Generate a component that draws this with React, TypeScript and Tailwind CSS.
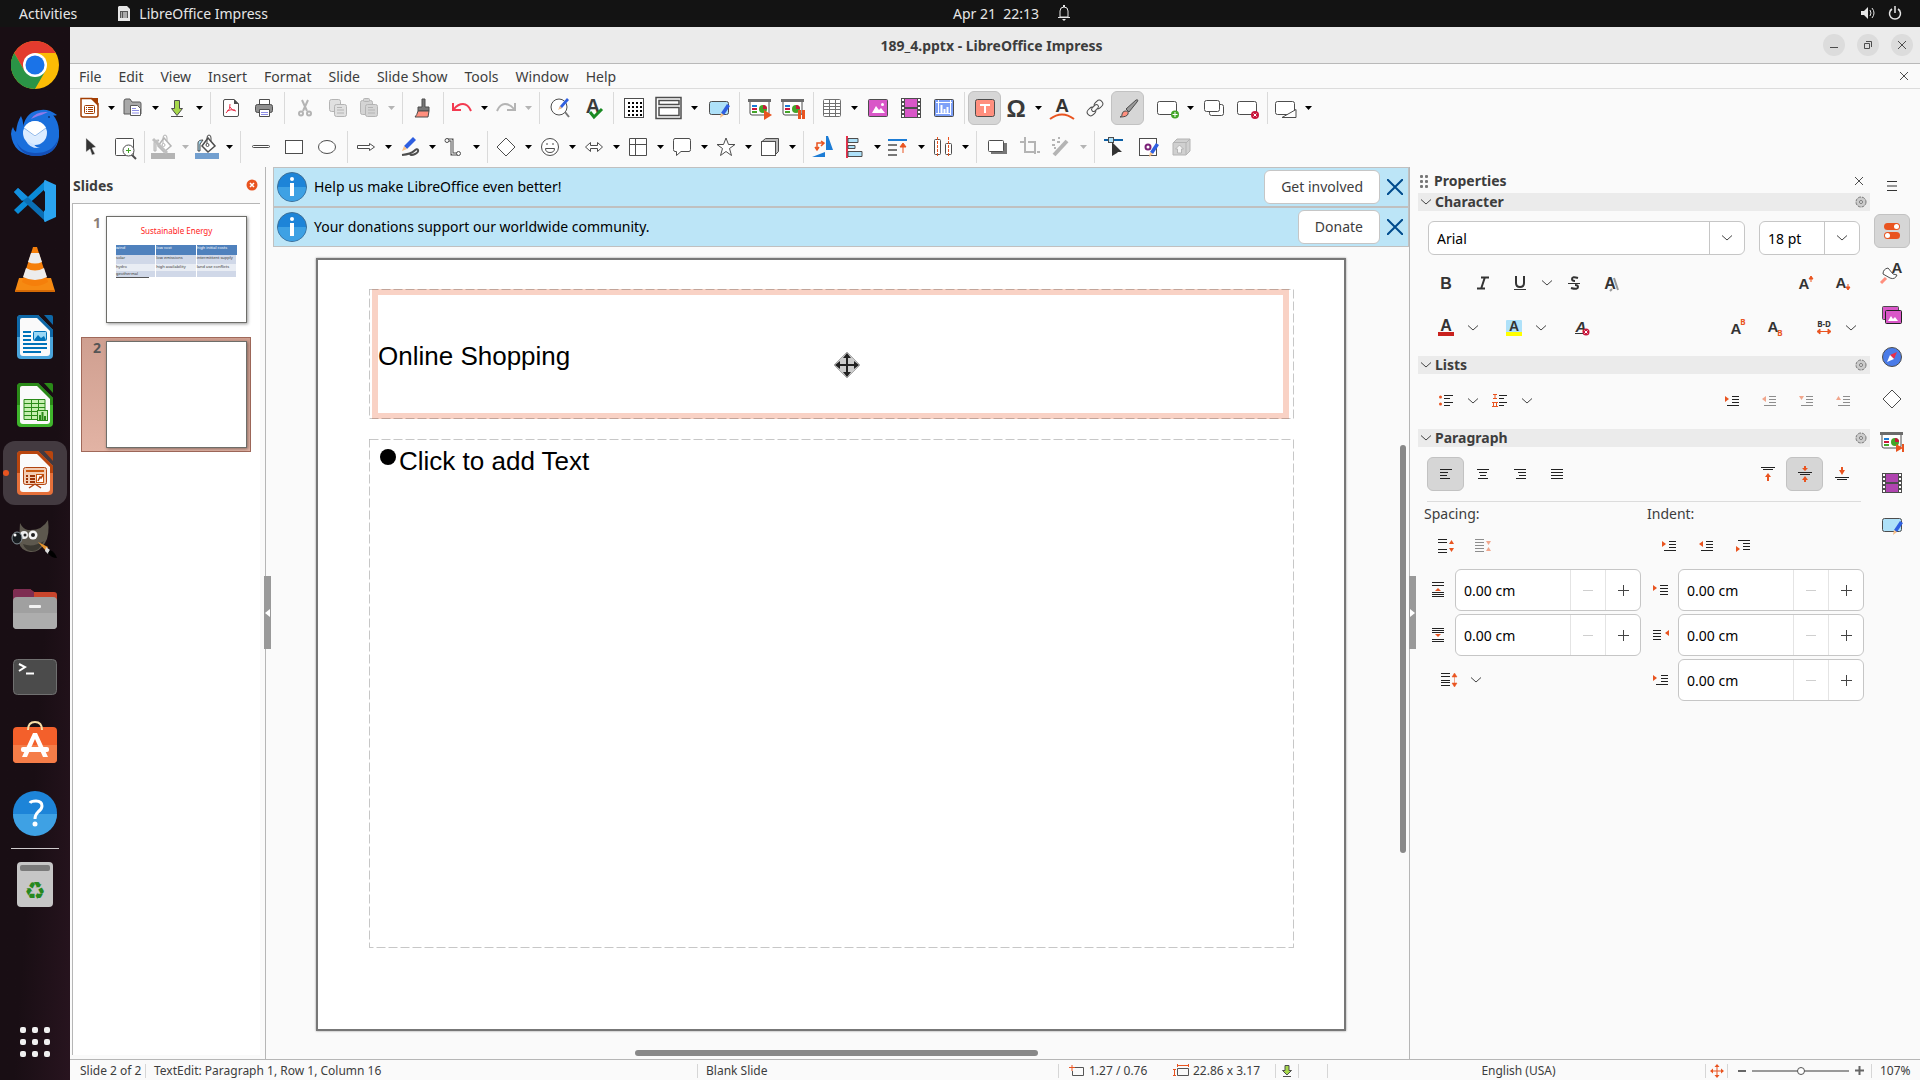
import React from "react";

const G = "#4d4d4d";
const D = "#b4b4b4";
const O = "#e95420";

const pencil = (x: number, y: number) => (
  <g transform={`translate(${x} ${y})`}>
    <path d="M9 0l3 2-6 9-3-2z" fill="#2f5fe0" />
    <path d="M3 9l3 2-4 3z" fill="#f7c088" />
  </g>
);

const slideScreen = (
  <>
    <path d="M2 6v11q0 2 2 2h15q2 0 2-2V6" fill="#fff" stroke={G} />
    <path d="M0 3h23v3H0z" fill="#6b6b6b" />
    <path d="M4 9h5v2H4z" fill="#1c7cd5" />
    <path d="M4 12h5v2H4z" fill="#c9173c" />
    <path d="M4 15h5v2H4z" fill="#43a528" />
    <circle cx="15" cy="13" r="4" fill="#43a528" />
    <path d="M15 13V9a4 4 0 0 1 4 4z" fill="#c9173c" />
  </>
);

const film = (fill: string) => (
  <>
    <path d="M2 2h20v20H2z" fill={G} />
    <path d="M6 3h12v8H6zM6 13h12v8H6z" fill={fill} />
    <path d="M4 3v19M20 3v19" stroke="#fff" strokeWidth="2" strokeDasharray="2 2" />
  </>
);

const picture = (
  <>
    <rect x="2.500" y="3.500" width="19" height="17" rx="1" fill="#d957c8" stroke={G} />
    <path d="M6 17l4-7 3 4 2-2 4 5z" fill="#fff" />
    <circle cx="16.500" cy="8.500" r="1.500" fill="#fff" />
  </>
);

const master = (
  <>
    <rect x="2.500" y="5.500" width="19" height="13" rx="2" fill="#aee1f9" stroke={G} />
    {pencil(11, 8)}
  </>
);

const bucket = (c: string, bar: string, fill: string) => (
  <>
    <path d="M3 16V8q0-3 5-3l-3 4v7z" fill={fill} stroke={c} />
    <path d="M13 3l7 8-7 6-6-6z" fill="#fff" stroke={c} strokeWidth="1.500" />
    <path d="M12 10V3q0-3 2-3t2 3v3" fill="none" stroke={c} />
    <circle cx="12.500" cy="10" r="1.500" fill="#fff" stroke={c} />
    <path d="M0 18h24v6H0z" fill={bar} />
  </>
);

const icons: Record<string, React.ReactNode> = {
  new: (
    <>
      <path d="M4 2.500h11l6 5V19q0 2-2 2H6q-2 0-2-2z" fill="#fff" stroke="#a33e03" strokeWidth="1.500" />
      <path d="M13 2h8v8z" fill="#a33e03" />
      <rect x="7.500" y="9.500" width="10" height="8" rx="1" fill="#fff" stroke="#a33e03" />
      <path d="M9 11.500h1m1 0h5M9 13.500h1m1 0h5M9 15.500h1m1 0h5" stroke="#a33e03" />
    </>
  ),
  open: (
    <>
      <path d="M3 18V5q0-2 2-2h4l2 3h8q1 0 1 2v10z" fill="#a9a9a9" stroke="#5a5a5a" />
      <path d="M9.500 9.500h7l3 3v7h-10z" fill="#fff" stroke="#5a5a5a" />
      <path d="M11 12.500h4M11 14.500h7M11 17h7" stroke="#8d8de6" />
    </>
  ),
  save: (
    <>
      <path d="M9.500 4.500h5v8h3l-5.500 7-5.500-7h3z" fill="#a6d84b" stroke={G} />
      <path d="M6 20.500h12" stroke={G} />
    </>
  ),
  pdf: (
    <>
      <path d="M4.500 5q0-1.500 1.500-1.500h9l4.500 4.500v11q0 1.500-1.500 1.500H6q-1.500 0-1.500-1.500z" fill="#fff" stroke={G} />
      <path d="M15 3v5h5z" fill={G} />
      <path d="M7 17q5-4 4-9m0 3q2 4 6 4m-9 0q4-2 8-1" fill="none" stroke="#e8304a" />
    </>
  ),
  print: (
    <>
      <path d="M7.500 9V3.500h10V9" fill="#fff" stroke={G} />
      <rect x="3.500" y="8.500" width="17" height="8" rx="2" fill="#8f8f8f" stroke={G} />
      <path d="M7.500 13.500h10v7h-10z" fill="#fff" stroke={G} />
      <path d="M9 16.500h7M9 18.500h7" stroke="#8d8de6" />
    </>
  ),
  cut: (
    <g fill="none" stroke={D} strokeWidth="2">
      <path d="M9 4l5 11M15 4l-5 11" />
      <circle cx="8" cy="17.500" r="2" />
      <circle cx="16" cy="17.500" r="2" />
    </g>
  ),
  copy: (
    <g fill="#e0e0e0" stroke={D}>
      <rect x="3.500" y="3.500" width="11" height="12" rx="2" />
      <rect x="8.500" y="8.500" width="12" height="12" rx="2" />
      <path d="M11 11.500h5M11 14h7M11 17h7" />
    </g>
  ),
  paste: (
    <g fill="#d4d4d4" stroke={D}>
      <rect x="3.500" y="4.500" width="12" height="14" rx="2" />
      <rect x="6.500" y="2.500" width="6" height="3" rx="1" />
      <rect x="8.500" y="8.500" width="12" height="12" rx="2" />
      <path d="M11 11.500h5M11 14h7M11 17h7" />
    </g>
  ),
  clone: (
    <>
      <path d="M11 3h3v8h4v4H7v-4h4z" fill="#777" stroke={G} />
      <path d="M7 15h11l-1 6H4q2-2 3-6z" fill="#ff8f7e" stroke={G} />
    </>
  ),
  undo: (
    <g fill="none" stroke="#f33a50" strokeWidth="2">
      <path d="M4 13q4-5 9-5t8 7" />
      <path d="M3 7v7h8" />
    </g>
  ),
  redo: (
    <g fill="none" stroke={D} strokeWidth="2">
      <path d="M20 13q-4-5-9-5t-8 7" />
      <path d="M21 7v7h-8" />
    </g>
  ),
  find: (
    <>
      <circle cx="11" cy="11" r="8" fill="#fff" stroke={G} />
      <path d="M17 16l4 5" stroke="#777" strokeWidth="2" />
      <path d="M19 2l2 2-7 8-3 1 1-3z" fill="#2f5fe0" />
      <path d="M12 10l2 2-4 2z" fill="#f7c088" />
    </>
  ),
  spell: (
    <>
      <text x="12" y="17" fontSize="20" fontWeight="700" textAnchor="middle" fill="#3a3a3a" className="font-[Liberation_Sans,sans-serif]">A</text>
      <path d="M9 16l4 5 8-8" fill="none" stroke="#1a8a22" strokeWidth="3" />
    </>
  ),
  grid: (
    <>
      <rect x="2.500" y="2.500" width="19" height="19" fill="#fff" stroke={G} />
      <path d="M6 7h14M6 11h14M6 15h14M6 19h14" stroke="#000" strokeWidth="2" strokeDasharray="2 2" />
    </>
  ),
  views: (
    <g fill="#fff" stroke={G} strokeWidth="1.500">
      <path d="M-1 1.500h25v21H-1z" />
      <path d="M2 4.500h20v4H2zM2 11.500h20v8H2z" />
    </g>
  ),
  master,
  show: (
    <>
      {slideScreen}
      <path d="M16 14l8 5-8 5z" fill={O} />
    </>
  ),
  showCurrent: (
    <>
      {slideScreen}
      <path d="M17 14h3v9h-3zM21 14h3v9h-3z" fill={O} />
    </>
  ),
  showEnd: (
    <>
      {slideScreen}
      <path d="M16 15l7 4-7 4zM22 15h2v8h-2z" fill={O} />
    </>
  ),
  table: (
    <g fill="#fff" stroke="#707070">
      <rect x="3.500" y="3.500" width="17" height="17" rx="1" />
      <path d="M3 7.500h18M3 10.500h18M3 13.500h18M3 17.500h18M9.500 3v18M15.500 3v18" />
    </g>
  ),
  picture,
  film: film("#d957c8"),
  filmDark: film("#b044b0"),
  chart: (
    <>
      <rect x="2.500" y="3.500" width="19" height="17" rx="1" fill="#7da0f8" stroke={G} />
      <path d="M4 6.500h16M6.500 4v14M4 17.500h15M18.500 4v15" fill="none" stroke="#fff" />
      <path d="M9.500 9v8M12.500 13v4M15.500 11v6" stroke="#fff" strokeWidth="2" />
    </>
  ),
  textbox: (
    <>
      <rect x="2.500" y="3.500" width="19" height="17" rx="2" fill="#ff8f7e" stroke={G} />
      <path d="M7 9h10M12 9v8" stroke="#fff" strokeWidth="2" />
    </>
  ),
  omega: <text x="12" y="21" fontSize="24" fontWeight="700" textAnchor="middle" fill="#3a3a3a" className="font-[Liberation_Sans,sans-serif]">Ω</text>,
  fontwork: (
    <>
      <text x="12" y="16" fontSize="19" fontWeight="700" textAnchor="middle" fill="#333" className="font-[Liberation_Sans,sans-serif]">A</text>
      <path d="M0 23q12-9 24 0" fill="none" stroke={O} strokeWidth="2" />
    </>
  ),
  link: (
    <g fill="none" stroke={G} transform="rotate(-45 12 12)">
      <rect x="2.500" y="8.500" width="9" height="7" rx="3.500" />
      <rect x="12.500" y="8.500" width="9" height="7" rx="3.500" />
      <rect x="8" y="10" width="8" height="4" rx="2" fill="#fafafa" />
    </g>
  ),
  brush: (
    <>
      <path d="M20 4q3-1 1 2L13 16l-3-3z" fill="#999" stroke={G} />
      <path d="M9 15q4 0 3 3-1 3-8 3 3-1 2-3 1-3 3-3z" fill="#ff8f7e" stroke={G} />
    </>
  ),
  newSlide: (
    <>
      <rect x="1.500" y="5.500" width="19" height="13" rx="2" fill="#fff" stroke={G} />
      <circle cx="19" cy="18.500" r="4" fill="#43a528" />
      <path d="M16.500 18.500h5M19 16v5" stroke="#fff" />
    </>
  ),
  duplicate: (
    <g fill="#fff" stroke={G}>
      <rect x="7.500" y="8.500" width="14" height="11" rx="2" />
      <rect x="2.500" y="4.500" width="15" height="11" rx="2" />
    </g>
  ),
  deleteSlide: (
    <>
      <rect x="2.500" y="5.500" width="19" height="13" rx="2" fill="#fff" stroke={G} />
      <circle cx="20" cy="19" r="4" fill="#c9173c" />
      <path d="M18.500 17.500l3 3m0-3l-3 3" stroke="#fff" />
    </>
  ),
  layout: (
    <g fill="#fff" stroke={G}>
      <rect x="1.500" y="5.500" width="19" height="13" rx="2" />
      <path d="M8 21.500l14-8v8z" />
    </g>
  ),
  cursor: <path d="M7 3l10 9-4 1 3 6-3 1-2-6-4 3z" fill="#333" stroke="#ddd" strokeWidth="0.500" />,
  zoom: (
    <>
      <rect x="3.500" y="3.500" width="18" height="17" rx="1" fill="#fff" stroke={G} />
      <path d="M20 20l4 4" stroke={G} strokeWidth="2" />
      <circle cx="16.500" cy="15.500" r="5.500" fill="#fff" stroke={G} />
      <path d="M14 15.500h5M16.500 13v5" stroke="#43a528" />
    </>
  ),
  lineColor: (
    <>
      {bucket(D, "#b4b4b4", "#ddd")}
      <path d="M2 4l14 14" stroke="#c0c0c0" strokeWidth="3" />
    </>
  ),
  fillColor: bucket(G, "#729fcf", "#aee1f9"),
  line: <rect x="3.500" y="10.500" width="17" height="2" rx="1" fill="#fff" stroke={G} />,
  rect: <rect x="3.500" y="5.500" width="17" height="13" fill="#fff" stroke={G} />,
  ellipse: <ellipse cx="12" cy="12" rx="8.500" ry="6.500" fill="#fff" stroke={G} />,
  arrow: <path d="M3.500 10.500h12v-2l5 3.500-5 3.500v-2h-12z" fill="#fff" stroke={G} />,
  curve: (
    <>
      <path d="M15 2l3 3-9 9-3-3z" fill="#2f5fe0" />
      <path d="M6 11l3 3-5 2z" fill="#f7c088" />
      <path d="M4 20q9-1 12-4t4-1-3 4-5 0" fill="none" stroke={G} strokeWidth="2" />
    </>
  ),
  connector: (
    <g fill="#fafafa" stroke={G}>
      <path d="M5 5h5v14h6" fill="none" strokeWidth="3" />
      <path d="M5 5h5v14h6" fill="none" stroke="#fafafa" />
      <circle cx="5" cy="5.500" r="2" />
      <circle cx="16.500" cy="18.500" r="2" />
    </g>
  ),
  diamond: <path d="M12 3l9 9-9 9-9-9z" fill="#fff" stroke={G} />,
  smiley: (
    <>
      <circle cx="12" cy="12" r="8.500" fill="#fff" stroke={G} />
      <path d="M8 9h2M14 9h2M7.500 13.500h9q0 4-4.500 4t-4.500-4" fill="none" stroke={G} />
    </>
  ),
  dblArrow: <path d="M3.500 12l5-4.500v3h7v-3l5 4.500-5 4.500v-3h-7v3z" fill="#fff" stroke={G} />,
  flow: <path d="M3.500 3.500h17v17h-17zM3 9.500h18M9.500 3v18" fill="#fff" stroke={G} />,
  callout: <path d="M5 3.500h14q1.500 0 1.500 2v9q0 2-1.500 2h-8L6.500 20.500v-4H5q-1.500 0-1.500-2v-9q0-2 1.500-2z" fill="#fff" stroke={G} />,
  star: <path d="M12 3l2.500 6.500H21l-5.500 4 2 7L12 16.500l-5.500 4 2-7L3 9.500h6.500z" fill="#fff" stroke={G} />,
  cube: (
    <>
      <path d="M3.500 7l4-3.500h13v13l-4 4z" fill="#bbb" stroke={G} />
      <rect x="3.500" y="6.500" width="14" height="14" fill="#fff" stroke={G} />
    </>
  ),
  rotate: (
    <>
      <path d="M14 1h2l5 14h-7zM0 22l13-5v5z" fill="#1c7cd5" />
      <path d="M5 13V8h6M3 12l2 3 2-3M9 6l3 2-3 3" fill="none" stroke={O} strokeWidth="1.500" />
    </>
  ),
  align: (
    <>
      <path d="M4 1v22" stroke="#e8304a" strokeWidth="2" />
      <path d="M5 3.500h10v4H5zM5 10.500h7v3H5zM5 16.500h14v5H5z" fill="#aee1f9" stroke={G} />
    </>
  ),
  arrange: (
    <>
      <path d="M1 5h19" stroke="#1c7cd5" strokeWidth="2" />
      <path d="M1 10h9M1 15h9M1 20h9" stroke="#777" strokeWidth="2" />
      <path d="M16 18v-7M13 12l3-4 3 4z" fill={O} stroke={O} />
    </>
  ),
  distribute: (
    <>
      <rect x="3.500" y="4.500" width="6" height="15" rx="1" fill="#fff" stroke={G} />
      <rect x="14.500" y="8.500" width="6" height="11" rx="1" fill="#fff" stroke={G} />
      <path d="M6.500 2v20M17.500 2v20" stroke={O} strokeDasharray="3 1" />
    </>
  ),
  shadow: (
    <>
      <path d="M6 8h16v11H6z" fill="#777" />
      <rect x="3.500" y="5.500" width="15" height="11" rx="1" fill="#fff" stroke={G} />
    </>
  ),
  crop: <path d="M2 7h5M7 2v15h9M10 7h7v12M19 17h3" fill="none" stroke={D} strokeWidth="2" />,
  filter: (
    <g stroke={D}>
      <path d="M18 6L5 20" strokeWidth="4" />
      <path d="M3 5h3M8 7h3M3 10h3M9 3h2M5 13h2" strokeWidth="2" />
    </g>
  ),
  points: (
    <>
      <path d="M1 5h19" stroke="#0b5fa5" strokeWidth="2" />
      <rect x="5.500" y="2.500" width="5" height="5" fill="#aee1f9" stroke={G} />
      <path d="M9 7l10 10h-4l-1 1-5 3z" fill="#333" />
    </>
  ),
  glue: (
    <>
      <rect x="3.500" y="3.500" width="17" height="17" fill="#fff" stroke={G} />
      <circle cx="12" cy="12" r="2.500" fill="#fff" stroke="#7b2178" strokeWidth="2" />
      {pencil(11, 8)}
    </>
  ),
  extrude: (
    <g fill="#d0d0d0" stroke={D}>
      <path d="M4 8l4-4h13v12l-4 4H4z" />
      <path d="M4 7.500h13V20M17 8l4-4" />
      <path d="M10.500 10l4 4h-2v4h-4v-4h-2z" fill="#f4f4f4" />
    </g>
  ),
  styles: (
    <>
      <text x="17" y="12" fontSize="15" fontWeight="700" textAnchor="middle" fill="#333" className="font-[Liberation_Sans,sans-serif]">A</text>
      <path d="M3 13q0-5 5-6l5 6 4 1q-2 5-7 3z" fill="#fff" stroke={G} />
      <path d="M1 22l5-5" stroke="#ff8f7e" strokeWidth="3" />
    </>
  ),
  gallery: (
    <>
      <rect x="2.500" y="3.500" width="16" height="13" rx="1" fill="#d957c8" stroke={G} />
      <rect x="5.500" y="7.500" width="16" height="13" rx="1" fill="#d957c8" stroke="#222" />
      <path d="M8 18l3-5 2 3 2-2 3 4z" fill="#fff" />
    </>
  ),
  navigator: (
    <>
      <circle cx="12" cy="12" r="9.500" fill="#4a7be8" stroke={G} />
      <path d="M17 7l-3 7-4-4z" fill="#e8304a" />
      <path d="M7 17l3-7 4 4z" fill="#fff" />
    </>
  ),
  deck: (
    <>
      <rect x="4" y="4" width="16" height="7" rx="3.500" fill={O} />
      <circle cx="16.500" cy="7.500" r="2.500" fill="#fff" />
      <rect x="4" y="13" width="16" height="7" rx="3.500" fill={O} />
      <circle cx="7.500" cy="16.500" r="2.500" fill="#fff" />
    </>
  ),
};

function Icon({ name }: { name: string }) {
  return (
    <svg width="24" height="24" viewBox="0 0 24 24" className="shrink-0 overflow-visible">
      {icons[name]}
    </svg>
  );
}

// "name" = plain button, "name+" = button with drop-down arrow, "|" = separator, "_" = space
// a leading "!" is a disabled one, a leading "*" a pressed one
const standardBar = [
  "new+", "open+", "save+", "|", "pdf", "print", "|", "!cut", "!copy", "!paste+", "|", "clone", "|",
  "undo+", "!redo+", "|", "find", "spell", "|", "grid", "views+", "master", "|", "show", "showCurrent", "|",
  "table+", "picture", "film", "chart", "|", "*textbox", "omega+", "fontwork", "link", "*brush", "_",
  "newSlide+", "duplicate", "deleteSlide", "|", "layout+",
];
const drawingBar = [
  "cursor", "zoom", "|", "!lineColor+", "fillColor+", "|", "line", "rect", "ellipse", "|", "arrow+", "curve+",
  "connector+", "|", "diamond+", "smiley+", "dblArrow+", "flow+", "callout+", "star+", "cube+", "|", "rotate",
  "align+", "arrange+", "distribute+", "|", "shadow", "!crop", "!filter+", "|", "points", "glue", "!extrude",
];

function Toolbar({ items, label }: { items: string[]; label: string }) {
  return (
    <div role="toolbar" aria-label={label} className="flex h-[39px] items-center pb-px pl-1">
      {items.map((item, i) => {
        if (item === "_") return <div key={i} className="w-[9px]" />;
        if (item === "|")
          return (
            <div key={i} className="flex w-2 justify-center">
              <div className="h-8 w-px bg-[#dadada]" />
            </div>
          );
        const disabled = item.startsWith("!");
        const pressed = item.startsWith("*");
        const name = item.replace(/[!*+]/g, "");
        if (item.endsWith("+"))
          return (
            <div key={i} className="flex items-center">
              <button disabled={disabled} aria-label={name} className={`flex justify-center ${name === "views" ? "w-[37px]" : "w-[30px]"}`}>
                <Icon name={name} />
              </button>
              <button disabled={disabled} aria-label={`${name} options`} className={`flex justify-center ${name === "views" ? "w-[15px]" : "w-[14px]"}`}>
                <svg width="7" height="4" viewBox="0 0 7 4">
                  <path d="M0 0h7L3.500 4z" fill={disabled ? "#b4b4b4" : "#000"} />
                </svg>
              </button>
            </div>
          );
        return (
          <button
            key={i}
            disabled={disabled}
            aria-label={name}
            aria-pressed={pressed}
            className={`flex h-[34px] w-[33px] items-center justify-center rounded-md ${pressed ? "border border-[#c2c2c2] bg-[#d6d6d6]" : ""}`}
          >
            <Icon name={name} />
          </button>
        );
      })}
    </div>
  );
}

function TopBar() {
  return (
    <header className="flex h-[27px] shrink-0 items-center bg-[#131313] pb-px text-[14px] text-[#e6e6e6]">
      <div className="flex flex-1 items-center">
        <button className="ml-[19px]">Activities</button>
        <button className="ml-[41px] flex items-center gap-[9px]">
          <svg width="12" height="15" viewBox="0 0 12 15">
            <path d="M1 0h8l3 3v12H0V1z" fill="#e6e6e6" />
            <path d="M2 5h8v7H2z" fill="#555" />
            <path d="M3 7h1m1 0h4M3 9h1m1 0h4M3 11h1m1 0h4" stroke="#fff" />
          </svg>
          LibreOffice Impress
        </button>
      </div>
      <button className="ml-[122px] flex items-center gap-[18px]">
        <span className="whitespace-pre">Apr 21  22:13</span>
        <svg width="14" height="16" viewBox="0 0 14 16">
          <path d="M3 12V6q0-4 4-4t4 4v6zM1 12.500h12" fill="none" stroke="#e6e6e6" />
          <path d="M5 14h4l-2 2zM6 0h2v2H6z" fill="#e6e6e6" />
        </svg>
      </button>
      <button aria-label="System menu" className="flex flex-1 items-center justify-end gap-3 pr-[18px]">
        <svg width="16" height="14" viewBox="0 0 16 14">
          <path d="M1 5h3l4-4v12L4 9H1z" fill="#e6e6e6" />
          <path d="M10 4q2 3 0 6M12 2q4 5 0 10" fill="none" stroke="#e6e6e6" />
        </svg>
        <svg width="14" height="14" viewBox="0 0 14 14">
          <path d="M4 3a5.500 5.500 0 1 0 6 0M7 0v7" fill="none" stroke="#e6e6e6" strokeWidth="1.500" />
        </svg>
      </button>
    </header>
  );
}

function OfficeDoc({ dark, light, children }: { dark: string; light: string; children: React.ReactNode }) {
  return (
    <>
      <path d="M10 2h17l15 15v25q0 4-4 4H10q-4 0-4-4V6q0-4 4-4z" fill={light} />
      <path d="M10 2h17l15 15v7H6V6q0-4 4-4z" fill={dark} />
      <path d="M11 5h15l13 13v22q0 3-3 3H12q-3 0-3-3V7q0-2 2-2z" fill="#fafafa" />
      <path d="M33 2h7q2 0 2 2v8z" fill={dark} />
      {children}
    </>
  );
}

const dockIcons: { name: string; art: React.ReactNode }[] = [
  {
    name: "Google Chrome",
    art: (
      <>
        <circle cx="24" cy="24" r="24" fill="#fbbc05" />
        <path d="M24 12h20.800A24 24 0 0 0 3.200 12L13.600 30z" fill="#e33b2e" />
        <path d="M3.200 12A24 24 0 0 0 24 48l10.400-18L24 36 13.600 30z" fill="#2a9446" />
        <circle cx="24" cy="24" r="12" fill="#fff" />
        <circle cx="24" cy="24" r="9.500" fill="#1a73e8" />
      </>
    ),
  },
  {
    name: "Thunderbird",
    art: (
      <>
        <path d="M10 7q3 6 2 11 3-16 18-17 8-1 16 5-3 1-4 0 7 8 6 22-2 18-23 19Q2 46 0 25q0-4 2-7 1 4 3 5 1-10 5-16z" fill="#1a6fdc" />
        <path d="M4 28q3 15 20 16 18 0 23-14-3 17-22 17Q8 47 4 28z" fill="#1450b8" />
        <path d="M20 10q5-8 17-7-6 3-10 4z" fill="#8f7be8" />
        <circle cx="24" cy="24" r="12" fill="#dcecff" />
        <path d="M13 19l11 9 11-9q-4-7-11-7t-11 7z" fill="#fff" />
        <path d="M13 19l11 8 11-8" fill="none" stroke="#8bb6ea" />
        <path d="M15 32q4 8 14 7-5-1-6-4z" fill="#cfe4ff" />
        <circle cx="38" cy="8" r="1" fill="#0c3270" />
      </>
    ),
  },
  {
    name: "Visual Studio Code",
    art: (
      <>
        <path d="M3 33l4 4 28-26V3z" fill="#0a8bd8" />
        <path d="M3 15l4-4 28 26v8z" fill="#0a6fb5" />
        <path d="M34 3l11 5v32l-11 5q-1 0-1-2V5q0-2 1-2z" fill="#2aa4f0" />
        <path d="M34 14v20L21 24z" fill="#1a0f16" />
        <path d="M3 15l4-4 10 9-6 4z" fill="#1490df" />
      </>
    ),
  },
  {
    name: "VLC media player",
    art: (
      <>
        <path d="M8 33h32l4 13H4z" fill="#f68a12" />
        <path d="M4 45h40v2H4z" fill="#d56a05" />
        <path d="M22 2h4l11 35q-13 8-26 0z" fill="#f57f0b" />
        <path d="M20 8h8l3 9q-7 3-14 0zM15 23q9 5 18 0l3 9q-12 6-24 0z" fill="#ececec" />
      </>
    ),
  },
  {
    name: "LibreOffice Writer",
    art: (
      <OfficeDoc dark="#0e68a8" light="#4aa5dc">
        <path d="M12 19h8M12 23h8M12 27h8M12 31h24M12 35h24M12 39h18" stroke="#0073b9" strokeWidth="2" />
        <rect x="22.500" y="18.500" width="13" height="9" rx="1" fill="#9ad7f5" stroke="#0073b9" />
        <path d="M23 27l4-5 3 3 3-2 2 4z" fill="#0073b9" />
      </OfficeDoc>
    ),
  },
  {
    name: "LibreOffice Calc",
    art: (
      <OfficeDoc dark="#2a8a18" light="#3fb52c">
        <g fill="#c5efb0" stroke="#2a8a18">
          <path d="M13 18.500h21v20H13zM13 22.500h21M13 26.500h21M13 30.500h21M13 34.500h21M20.500 18v20M27.500 18v20" />
          <rect x="26.500" y="29.500" width="10" height="10" />
        </g>
        <path d="M29 34v5M31.500 31v8M34 35v4" stroke="#2a8a18" strokeWidth="2" />
      </OfficeDoc>
    ),
  },
  {
    name: "LibreOffice Impress",
    art: (
      <OfficeDoc dark="#b8450e" light="#e5703a">
        <rect x="12.500" y="18.500" width="23" height="17" rx="2" fill="#f2cdb4" stroke="#b0430f" />
        <path d="M15 22h18" stroke="#c9570f" strokeWidth="2" />
        <path d="M15 27h2M15 30h2M15 33h2M19 27h5M19 30h5M19 33h5" stroke="#9c3406" strokeWidth="2" />
        <rect x="25.500" y="25.500" width="7" height="8" fill="#fff" stroke="#c9570f" />
        <path d="M27 32l2-4 1 1 2-3M24 35l-6 4M24 35l6 4" fill="none" stroke="#b0430f" strokeWidth="1.500" />
      </OfficeDoc>
    ),
  },
  {
    name: "GIMP",
    art: (
      <>
        <path d="M9 6q3 6 8 7 14 1 20-10 2 15-3 23-6 10-15 9-10-2-11-10z" fill="#5d584e" />
        <path d="M12 27q10 4 21-3-5 11-13 10-6-1-8-7z" fill="#3b3831" />
        <circle cx="13" cy="18" r="4" fill="#eee" />
        <circle cx="22" cy="18" r="4.500" fill="#f5f5f5" />
        <circle cx="14" cy="18" r="1.500" fill="#222" />
        <circle cx="22" cy="18" r="2" fill="#222" />
        <ellipse cx="6" cy="21" rx="5" ry="6" fill="#181c20" stroke="#8a959c" />
        <circle cx="4" cy="18" r="1.500" fill="#fff" />
        <path d="M27 25l10 5-2 4z" fill="#e8942c" />
        <path d="M35 30l4 3-2 4-3-3z" fill="#ddd" />
        <path d="M39 33q5 2 7 8-6 0-9-5z" fill="#000" />
      </>
    ),
  },
  {
    name: "Files",
    art: (
      <>
        <path d="M2 16V7q0-3 3-3h14l4 3h20q3 0 3 3v8z" fill="#c9452c" />
        <path d="M2 16V7q0-3 3-3h14l4 3v9z" fill="#7e2d52" />
        <rect x="2" y="12" width="44" height="32" rx="4" fill="#a0a0a0" />
        <path d="M2 28h44v12q0 4-4 4H6q-4 0-4-4z" fill="#adadad" />
        <rect x="18" y="20" width="12" height="3" rx="1" fill="#f2f2f2" />
      </>
    ),
  },
  {
    name: "Terminal",
    art: (
      <>
        <rect x="2.500" y="6.500" width="43" height="35" rx="4" fill="#4b4b4b" stroke="#707070" />
        <path d="M8 11l6 3-6 4M15 20.500h8" fill="none" stroke="#fff" strokeWidth="2" />
      </>
    ),
  },
  {
    name: "Ubuntu Software",
    art: (
      <>
        <rect x="2" y="6" width="44" height="36" rx="4" fill="#f3602b" />
        <path d="M2 24h44v14q0 4-4 4H6q-4 0-4-4z" fill="#f57d48" />
        <path d="M17 9q0-8 7-8t7 8" fill="none" stroke="#f9dfa8" strokeWidth="2" />
        <path d="M22 12h4l11 24h-5l-8-18-8 18h-5z" fill="#fff" />
        <rect x="10" y="26" width="28" height="5" rx="2" fill="#fff" />
      </>
    ),
  },
  {
    name: "Help",
    art: (
      <>
        <circle cx="24" cy="24" r="22" fill="#1d84d8" />
        <path d="M2 25h44a22 22 0 0 1-44 0z" fill="#3ea1e4" />
        <path d="M19 14q1-2 6-2 6 0 6 5 0 3-4 6-3 3-3 7" fill="none" stroke="#fff" strokeWidth="3" />
        <circle cx="24" cy="35" r="2.500" fill="#fff" />
      </>
    ),
  },
];

function Dock() {
  return (
    <nav aria-label="Dock" className="flex w-[70px] shrink-0 flex-col items-center bg-linear-to-br from-[#190e14] from-60% to-[#28141f] pt-1">
      {dockIcons.map((d) => {
        const active = d.name === "LibreOffice Impress";
        return (
          <div key={d.name} className="relative flex h-[68px] w-full items-center justify-center">
            <button aria-label={d.name} className={`flex size-16 items-center justify-center rounded-xl ${active ? "bg-[#433a40]" : ""}`}>
              <svg width="48" height="48" viewBox="0 0 48 48">{d.art}</svg>
            </button>
            {active && <span className="absolute left-[3px] size-[6px] rounded-full bg-[#e95420]" />}
          </div>
        );
      })}
      <div className="mt-px h-px w-12 shrink-0 bg-[#cfcbcd]" />
      <button aria-label="Trash" className="mt-3">
        <svg width="48" height="48" viewBox="0 0 48 48">
          <rect x="6" y="1" width="36" height="45" rx="4" fill="#c6c6c6" />
          <rect x="9" y="4" width="30" height="6" rx="2" fill="#7a7a7a" />
          <text x="24" y="38" fontSize="24" textAnchor="middle" fill="#26881e" className="font-['DejaVu_Sans',sans-serif]">♻</text>
        </svg>
      </button>
      <button aria-label="Show Applications" className="mt-auto mb-[23px]">
        <svg width="30" height="30" viewBox="0 0 30 30" fill="#f0f0f0">
          {[0, 12, 24].map((y) => [0, 12, 24].map((x) => <rect key={`${x}-${y}`} x={x} y={y} width="6" height="6" rx="2" />))}
        </svg>
      </button>
    </nav>
  );
}

function TitleBar() {
  const btn = "flex size-[22px] items-center justify-center rounded-full bg-[#dcdcdc]";
  return (
    <div className="flex h-[37px] shrink-0 items-center border-b border-[#b9b9b9] bg-[#ebebeb] pr-[7px]">
      <div className="w-[90px]" />
      <h1 className="flex-1 text-center text-[14px] font-bold text-[#3d3d3d]">189_4.pptx - LibreOffice Impress</h1>
      <div className="flex gap-3">
        <button aria-label="Minimize" className={btn}>
          <svg width="8" height="8" viewBox="0 0 8 8"><path d="M0 6.500h8" stroke={G} /></svg>
        </button>
        <button aria-label="Restore" className={btn}>
          <svg width="8" height="8" viewBox="0 0 8 8" fill="none" stroke={G}><path d="M.5 2.500h5v5h-5zM2 .5h5.500V6" /></svg>
        </button>
        <button aria-label="Close" className={btn}>
          <svg width="8" height="8" viewBox="0 0 8 8"><path d="M0 0l8 8M8 0L0 8" stroke={G} /></svg>
        </button>
      </div>
    </div>
  );
}

function MenuBar() {
  const menus = ["File", "Edit", "View", "Insert", "Format", "Slide", "Slide Show", "Tools", "Window", "Help"];
  return (
    <div className="flex h-[25px] shrink-0 items-center border-b border-[#dcdcdc] pr-3 pl-[9px]">
      <div className="flex flex-1 gap-[17px] text-[14px]">
        {menus.map((m) => (
          <button key={m}>{m}</button>
        ))}
      </div>
      <button aria-label="Close document">
        <svg width="8" height="8" viewBox="0 0 8 8"><path d="M0 0l8 8M8 0L0 8" stroke={G} /></svg>
      </button>
    </div>
  );
}

function SlidesPanel() {
  const rows = [
    ["solar", "low emissions", "intermittent supply"],
    ["hydro", "high availability", "land use conflicts"],
    ["geothermal", "", ""],
  ];
  return (
    <aside className="flex w-[195px] shrink-0 flex-col">
      <div className="flex h-9 items-center justify-between pr-[7px] pl-[3px]">
        <h2 className="text-[14px] font-bold">Slides</h2>
        <button aria-label="Close pane">
          <svg width="12" height="12" viewBox="0 0 12 12">
            <circle cx="6" cy="6" r="5.500" fill={O} />
            <path d="M4 4l4 4M8 4l-4 4" stroke="#fff" strokeWidth="1.500" />
          </svg>
        </button>
      </div>
      <div className="mr-[5px] mb-1 ml-[2px] flex-1 border-t border-l border-[#b6b6b6] bg-white pt-2 pl-2">
        <div className="flex w-[170px] gap-1 pt-1 pl-3">
          <span className="w-[9px] text-[14px] leading-[14px] font-bold text-[#8a7d76]">1</span>
          <div className="h-[107px] w-[141px] shrink-0 border border-[#6e6e6a] bg-white px-[9px] shadow-[1px_1px_3px_#00000066]">
            <p className="mt-2 h-5 text-center text-[8px] leading-[12px] text-[#f22]">Sustainable Energy</p>
            <table className="w-full table-fixed border-separate border-spacing-0 text-[4px] leading-[5px] whitespace-nowrap text-[#333]">
              <thead>
                <tr className="h-[10px] bg-[#4f81bd] text-left align-top text-white">
                  <th className="border-r border-white p-0 font-normal">wind</th>
                  <th className="border-r border-white p-0 font-normal">low cost</th>
                  <th className="p-0 font-normal">high initial costs</th>
                </tr>
              </thead>
              <tbody>
                {rows.map((r, i) => (
                  <tr key={i} className={i === 0 ? "h-[9px] bg-[#d0d8e8] align-top" : i === 1 ? "h-[7px] bg-[#e9edf4] align-top" : "h-[6px] bg-[#d0d8e8] align-top"}>
                    {r.map((c, j) => (
                      <td key={j} className="border-r border-white p-0">{c}</td>
                    ))}
                  </tr>
                ))}
              </tbody>
            </table>
            <div className="h-px w-[33px] bg-[#555]" />
          </div>
        </div>
        <div className="mt-[14px] flex w-[170px] gap-1 border border-[#a0695a] bg-linear-to-b from-[#cf9f90] to-[#e2b3a4] py-[3px] pl-[11px]">
          <span className="w-[9px] text-[14px] leading-[14px] font-bold text-[#555]">2</span>
          <div className="h-[107px] w-[141px] shrink-0 border border-[#6e6e6a] bg-white shadow-[1px_1px_3px_#00000066]" />
        </div>
      </div>
    </aside>
  );
}

function InfoBar({ text, action }: { text: string; action: string }) {
  return (
    <div className="flex h-10 shrink-0 items-center border border-[#c0c0c0] bg-[#bce5f7] pr-[5px] pb-px pl-[3px] text-[14px] text-black">
      <svg width="30" height="30" viewBox="0 0 30 30">
        <circle cx="15" cy="15" r="14.500" fill="#1d84d8" stroke="#3f6f96" />
        <path d="M1 15h28a14 14 0 0 1-28 0z" fill="#3ea1e4" />
        <circle cx="15" cy="7" r="2" fill="#fff" />
        <path d="M15 11v13" stroke="#fff" strokeWidth="4" />
      </svg>
      <span className="ml-[7px] flex-1 leading-[20px]">{text}</span>
      <button className="h-[34px] rounded-md border border-[#c6c6c6] bg-white px-4 text-[#3d3d3d]">{action}</button>
      <button aria-label="Close" className="ml-[7px]">
        <svg width="16" height="16" viewBox="0 0 16 16"><path d="M0 0l16 16M16 0L0 16" stroke="#004b8d" strokeWidth="2" /></svg>
      </button>
    </div>
  );
}

// dashed frame around a placeholder
function Dashes() {
  return (
    <svg className="pointer-events-none absolute inset-0 size-full" fill="none">
      <rect x="0.500" y="0.500" className="h-[calc(100%-1px)] w-[calc(100%-1px)]" stroke="#000" strokeOpacity="0.220" strokeDasharray="9 3" />
    </svg>
  );
}

function Editor() {
  return (
    <main className="relative flex min-w-0 flex-1 flex-col border-l border-[#b6b6b6] pl-[7px]">
      <InfoBar text="Help us make LibreOffice even better!" action="Get involved" />
      <InfoBar text="Your donations support our worldwide community." action="Donate" />
      <div className="mt-[11px] mr-[63px] mb-[28px] ml-[43px] flex flex-1 flex-col border-2 border-[#777] bg-white pt-[29px] pr-[50px] pb-[81px] pl-[51px] font-['Liberation_Sans',Arial,sans-serif] text-[26px] leading-[30px] text-black shadow-[0_0_2px_#00000066]">
        <div className="relative h-[130px] shrink-0 pr-[5px] pl-[3px]">
          <div className="flex h-full items-center border-[6px] border-[#f9d2c5] pt-1">Online Shopping</div>
          <Dashes />
          <svg width="26" height="26" viewBox="0 0 26 26" className="absolute top-[63px] left-[465px]">
            <path d="M13 0l13 13-13 13L0 13z" fill="#ccc" stroke="#aaa" />
            <path d="M13 4v18M4 13h18" stroke="#222" strokeWidth="2" />
            <path d="M13 1l4 5H9zM13 25l4-5H9zM1 13l5-4v8zM25 13l-5-4v8z" fill="#222" />
          </svg>
        </div>
        <div className="relative mt-5 flex flex-1 items-start pt-[7px] pl-[11px]">
          <span className="mt-[3px] mr-[3px] size-4 rounded-full bg-black" />
          <span>Click to add Text</span>
          <Dashes />
        </div>
      </div>
      <div className="absolute top-[278px] right-[3px] h-[408px] w-[6px] rounded-full bg-[#888]" />
      <div className="absolute bottom-[3px] left-[369px] h-[6px] w-[403px] rounded-full bg-[#888]" />
      <button aria-label="Hide slides" className="absolute top-[409px] -left-[2px] flex h-[73px] w-[7px] items-center justify-center bg-[#999]">
        <svg width="5" height="8" viewBox="0 0 5 8"><path d="M5 0v8L0 4z" fill="#fff" /></svg>
      </button>
    </main>
  );
}

/* ---- sidebar ---- */

function Chevron() {
  return (
    <svg width="10" height="6" viewBox="0 0 10 6">
      <path d="M0 .5l5 4.500 5-4.500" fill="none" stroke="#444" />
    </svg>
  );
}

function DropButton() {
  return (
    <button aria-label="More options" className="flex w-[17px] justify-center">
      <Chevron />
    </button>
  );
}

function Tool({ label, pressed, dim, children }: { label: string; pressed?: boolean; dim?: boolean; children: React.ReactNode }) {
  return (
    <button
      aria-label={label}
      disabled={dim}
      className={`flex h-[34px] w-[37px] items-center justify-center rounded-md ${pressed ? "border border-[#c2c2c2] bg-[#d6d6d6]" : ""} ${dim ? "opacity-50" : ""}`}
    >
      <svg width="16" height="16" viewBox="0 0 16 16" className="overflow-visible">{children}</svg>
    </button>
  );
}

function Letter({ ch = "A", x = 8, y = 14, size = 16 }: { ch?: string; x?: number; y?: number; size?: number }) {
  return (
    <text x={x} y={y} fontSize={size} fontWeight="700" textAnchor="middle" fill="#333" className="font-['Liberation_Sans',Arial,sans-serif]">
      {ch}
    </text>
  );
}

function Section({ title }: { title: string }) {
  return (
    <div className="flex h-[18px] items-center bg-[#ebebeb] pr-[3px] pl-[3px]">
      <Chevron />
      <h3 className="ml-1 flex-1 text-[14px] leading-[18px] font-bold">{title}</h3>
      <button aria-label={`${title} options`}>
        <svg width="12" height="12" viewBox="0 0 12 12" fill="none" stroke="#777">
          <circle cx="6" cy="6" r="5" fill="#ccc" strokeDasharray="3 1" />
          <circle cx="6" cy="6" r="1.500" fill="#eee" />
        </svg>
      </button>
    </div>
  );
}

function Spin({ label, icon }: { label: string; icon: React.ReactNode }) {
  return (
    <div className="flex items-center">
      <svg width="16" height="16" viewBox="0 0 16 16" className="mr-[9px] shrink-0">{icon}</svg>
      <div className="flex h-[42px] min-w-0 flex-1 rounded-md border border-[#c6c6c6] bg-white">
        <input aria-label={label} defaultValue="0.00 cm" className="w-0 min-w-0 flex-1 pl-2 text-[14px] text-black outline-none" />
        <button aria-label={`Decrease ${label}`} className="flex w-[35px] items-center justify-center border-l border-[#e4e4e4]">
          <span className="h-px w-[10px] bg-[#cfcfcf]" />
        </button>
        <button aria-label={`Increase ${label}`} className="flex w-[35px] items-center justify-center border-l border-[#e4e4e4]">
          <svg width="11" height="11" viewBox="0 0 11 11"><path d="M0 5.500h11M5.500 0v11" stroke="#444" /></svg>
        </button>
      </div>
    </div>
  );
}

const K = "#222";
const indentLines = <path d="M8 3.500h7M8 6.500h7M8 9.500h7M3 12.500h12" stroke={K} />;

function Sidebar() {
  return (
    <aside className="relative flex w-[461px] shrink-0 flex-col border-l border-[#b6b6b6] pl-[8px]">
      <div className="flex h-[26px] items-center pt-px pr-[7px]">
        <svg width="9" height="14" viewBox="0 0 9 14" fill="#777" className="ml-px">
          {[1, 6, 11].map((y) => [1, 6].map((x) => <rect key={`${x}-${y}`} x={x} y={y} width="3" height="3" rx="1" />))}
        </svg>
        <h2 className="ml-[6px] flex-1 text-[14px] leading-[18px] font-bold">Properties</h2>
        <button aria-label="Close sidebar deck">
          <svg width="8" height="8" viewBox="0 0 8 8"><path d="M0 0l8 8M8 0L0 8" stroke={G} /></svg>
        </button>
      </div>

      <Section title="Character" />
      <div className="flex gap-[14px] pt-[10px] pr-[10px] pl-[10px]">
        <div className="relative flex h-[34px] flex-1 rounded-md border border-[#c6c6c6] bg-white">
          <select aria-label="Font name" className="flex-1 appearance-none pl-2 text-[14px] text-black outline-none">
            <option>Arial</option>
          </select>
          <span className="pointer-events-none absolute inset-y-0 right-0 flex w-[35px] items-center justify-center border-l border-[#c6c6c6]">
            <Chevron />
          </span>
        </div>
        <div className="relative flex h-[34px] w-[101px] rounded-md border border-[#c6c6c6] bg-white">
          <select aria-label="Font size" className="flex-1 appearance-none pl-2 text-[14px] text-black outline-none">
            <option>18 pt</option>
          </select>
          <span className="pointer-events-none absolute inset-y-0 right-0 flex w-[35px] items-center justify-center border-l border-[#c6c6c6]">
            <Chevron />
          </span>
        </div>
      </div>
      <div className="mt-[11px] flex items-center pr-[9px] pl-[9px]">
        <Tool label="Bold"><Letter ch="B" /></Tool>
        <Tool label="Italic">
          <path d="M6 2.500h8M2 13.500h8M10 2L6 14" stroke="#333" strokeWidth="2" />
        </Tool>
        <Tool label="Underline">
          <path d="M4 1v7q0 4 4 4t4-4V1" fill="none" stroke="#333" strokeWidth="2" />
          <path d="M2 14.500h12" stroke="#333" />
        </Tool>
        <DropButton />
        <Tool label="Strikethrough">
          <path d="M12 3q-6-2-6 1 0 2 3 2m0 4q3 0 3 2 0 3-7 1" fill="none" stroke="#333" strokeWidth="2" />
          <path d="M2 8.500h12" stroke="#333" />
        </Tool>
        <Tool label="Shadow">
          <path d="M11 3l4 12M9 14l-2 2" stroke="#999" strokeWidth="2" />
          <Letter x={7} y={14} />
        </Tool>
        <div className="flex-1" />
        <Tool label="Increase font size">
          <Letter x={6} y={14} size={15} />
          <path d="M13 7V2M11 4l2-3 2 3z" fill={O} stroke={O} />
        </Tool>
        <Tool label="Decrease font size">
          <Letter x={6} y={13} size={15} />
          <path d="M13 9v5M11 12l2 3 2-3z" fill={O} stroke={O} />
        </Tool>
      </div>
      <div className="mt-[11px] flex items-center pr-[11px] pl-[9px]">
        <Tool label="Font color">
          <Letter y={11} />
          <path d="M0 12h16v4H0z" fill="#c9211e" />
        </Tool>
        <DropButton />
        <div className="w-[14px]" />
        <Tool label="Highlighting">
          <rect width="16" height="14" rx="1" fill="#aee1f9" />
          <Letter y={11} size={14} />
          <path d="M0 12h16v4H0z" fill="#ff0" />
        </Tool>
        <DropButton />
        <div className="w-[14px]" />
        <Tool label="Clear formatting">
          <text x="7" y="12" fontSize="15" fontStyle="italic" fontWeight="700" textAnchor="middle" fill="#333" className="font-['Liberation_Sans',Arial,sans-serif]">A</text>
          <path d="M1 13.500h8" stroke="#333" />
          <circle cx="12" cy="12" r="3.500" fill="#c9173c" />
          <path d="M10.500 10.500l3 3m0-3l-3 3" stroke="#fff" />
        </Tool>
        <div className="flex-1" />
        <Tool label="Superscript">
          <Letter x={6} y={14} size={15} />
          <text x="13" y="5" fontSize="8" fontWeight="700" textAnchor="middle" fill={O}>B</text>
        </Tool>
        <Tool label="Subscript">
          <Letter x={6} y={12} size={15} />
          <text x="13" y="16" fontSize="8" fontWeight="700" textAnchor="middle" fill={O}>B</text>
        </Tool>
        <div className="w-3" />
        <Tool label="Character spacing">
          <text x="8" y="7" fontSize="8" fontWeight="700" textAnchor="middle" fill="#333">B-D</text>
          <path d="M2 11.500h12M4 9l-3 2.500L4 14zM12 9l3 2.500-3 2.500z" fill={O} stroke={O} />
        </Tool>
        <DropButton />
      </div>

      <div className="h-[11px]" />
      <Section title="Lists" />
      <div className="mt-[10px] flex items-center pr-[9px] pl-[9px]">
        <Tool label="Unordered list">
          <circle cx="2.500" cy="4" r="1.500" fill={O} />
          <circle cx="2.500" cy="11" r="1.500" fill={O} />
          <path d="M6 2.500h9M6 5.500h6M6 9.500h9M6 12.500h6" stroke={K} />
        </Tool>
        <DropButton />
        <Tool label="Ordered list">
          <path d="M1 1.500h4M3 1v4M1 5.500h4M0 9.500h6M1.500 9v4M4.500 9v4M0 13.500h6" stroke={O} />
          <path d="M7 2.500h8M7 5.500h5M7 9.500h8M7 12.500h5" stroke={K} />
        </Tool>
        <DropButton />
        <div className="flex-1" />
        <Tool label="Demote">
          <path d="M1 3l4 3-4 3z" fill={O} />
          {indentLines}
        </Tool>
        <Tool label="Promote" dim>
          <path d="M5 3v6L1 6z" fill={O} />
          {indentLines}
        </Tool>
        <Tool label="Move down" dim>
          <path d="M1 3h5L3.500 7z" fill={O} />
          {indentLines}
        </Tool>
        <Tool label="Move up" dim>
          <path d="M1 7h5L3.500 3z" fill={O} />
          {indentLines}
        </Tool>
      </div>

      <div className="h-[11px]" />
      <Section title="Paragraph" />
      <div className="mt-[10px] flex items-center pr-[10px] pl-[9px]">
        <Tool label="Align left" pressed><path d="M2 3.500h12M2 6.500h8M2 9.500h7M2 12.500h10" stroke={K} /></Tool>
        <Tool label="Center"><path d="M2 3.500h12M4 6.500h8M5 9.500h6M3 12.500h10" stroke={K} /></Tool>
        <Tool label="Align right"><path d="M2 3.500h12M6 6.500h8M7 9.500h7M4 12.500h10" stroke={K} /></Tool>
        <Tool label="Justify"><path d="M2 3.500h12M2 6.500h12M2 9.500h12M2 12.500h12" stroke={K} /></Tool>
        <div className="flex-1" />
        <Tool label="Align top">
          <path d="M1 1.500h14M3 3.500h10" stroke={K} />
          <path d="M5 11l3-4 3 4H9v4H7v-4z" fill={O} />
        </Tool>
        <Tool label="Center vertically" pressed>
          <path d="M1 6.500h14M3 8.500h10" stroke={K} />
          <path d="M5 2h2V0h2v2h2L8 5zM5 14l3-4 3 4H9v2H7v-2z" fill={O} />
        </Tool>
        <Tool label="Align bottom">
          <path d="M1 11.500h14M3 13.500h10" stroke={K} />
          <path d="M5 4h2V1h2v3h2L8 9z" fill={O} />
        </Tool>
      </div>
      <div className="mx-[9px] mt-[10px] h-px bg-[#dcdcdc]" />
      <div className="grid grid-cols-2 gap-x-[6px] pr-[6px] pl-[6px]">
        <div>
          <div className="mt-[2px] text-[14px] leading-[20px]">Spacing:</div>
          <div className="mt-[5px] flex pl-[3px]">
            <Tool label="Increase paragraph spacing">
              <path d="M0 1.500h9M0 4.500h9M0 11.500h9M0 14.500h9" stroke={K} />
              <path d="M11 6l2.500-4L16 6zM11 10h5l-2.500 4z" fill={O} />
            </Tool>
            <Tool label="Decrease paragraph spacing" dim>
              <path d="M0 1.500h9M0 4.500h9M0 7.500h9M0 10.500h9M0 13.500h9" stroke={K} />
              <path d="M11 3h5l-2.500 4zM11 13l2.500-4 2.500 4z" fill={O} />
            </Tool>
          </div>
          <div className="mt-[6px] flex flex-col gap-[3px] pl-[6px]">
            <Spin
              label="Above paragraph spacing"
              icon={<><path d="M2 .5h12M2 3.500h12M2 10.500h12M2 12.500h12M2 14.500h12" stroke={K} /><path d="M5 9l3-3 3 3z" fill={O} /></>}
            />
            <Spin
              label="Below paragraph spacing"
              icon={<><path d="M2 1.500h12M2 3.500h12M2 5.500h12M2 12.500h12M2 14.500h12" stroke={K} /><path d="M5 7h6l-3 3z" fill={O} /></>}
            />
            <div className="flex h-[42px] items-center">
              <Tool label="Line spacing">
                <path d="M0 1.500h9M0 4.500h9M0 8.500h9M0 10.500h9M0 13.500h9" stroke={K} />
                <path d="M13.500 4v8M11 5l2.500-4L16 5zM11 11h5l-2.500 4z" fill={O} stroke={O} strokeWidth="0.500" />
              </Tool>
              <DropButton />
            </div>
          </div>
        </div>
        <div>
          <div className="mt-[2px] text-[14px] leading-[20px]">Indent:</div>
          <div className="mt-[5px] flex pl-[3px]">
            <Tool label="Increase indent">
              <path d="M1 3l4 3-4 3z" fill={O} />
              {indentLines}
            </Tool>
            <Tool label="Decrease indent">
              <path d="M5 3v6L1 6z" fill={O} />
              {indentLines}
            </Tool>
            <Tool label="Hanging indent">
              <path d="M1 8l4 3-4 3z" fill={O} />
              <path d="M3 2.500h12M8 5.500h7M8 8.500h7M8 11.500h7" stroke={K} />
            </Tool>
          </div>
          <div className="mt-[6px] flex flex-col gap-[3px] pl-[6px]">
            <Spin label="Before text indent" icon={<><path d="M0 3l4 3-4 3z" fill={O} /><path d="M7 3.500h8M7 6.500h8M7 9.500h8M7 12.500h8" stroke={K} /></>} />
            <Spin label="After text indent" icon={<><path d="M16 3v6l-4-3z" fill={O} /><path d="M0 3.500h8M0 6.500h8M0 9.500h8M0 12.500h8" stroke={K} /></>} />
            <Spin label="First line indent" icon={<><path d="M0 3l4 3-4 3z" fill={O} />{indentLines}</>} />
          </div>
        </div>
      </div>
      <button aria-label="Hide sidebar" className="absolute top-[409px] -left-px flex h-[73px] w-[7px] items-center justify-center bg-[#999]">
        <svg width="5" height="8" viewBox="0 0 5 8"><path d="M0 0v8l5-4z" fill="#fff" /></svg>
      </button>
    </aside>
  );
}

function TabBar() {
  const tabs = ["deck", "styles", "gallery", "navigator", "diamond", "showEnd", "filmDark", "master"];
  return (
    <nav aria-label="Sidebar decks" className="flex w-[50px] shrink-0 flex-col items-center gap-2 pt-[2px] pr-[10px] pl-1">
      <button aria-label="Sidebar settings" className="mb-[3px] flex h-[34px] w-9 items-center justify-center">
        <svg width="10" height="10" viewBox="0 0 10 10"><path d="M0 .5h10M0 5h10M0 9.500h10" stroke="#333" /></svg>
      </button>
      {tabs.map((t, i) => (
        <button
          key={t}
          aria-label={t}
          className={`flex h-[34px] w-9 items-center justify-center rounded-md ${i === 0 ? "border border-[#c2c2c2] bg-[#d6d6d6]" : ""}`}
        >
          <Icon name={t} />
        </button>
      ))}
    </nav>
  );
}

function StatusBar() {
  const sep = <div className="h-[14px] w-px shrink-0 bg-[#d6d6d6]" />;
  return (
    <footer className="flex h-[21px] shrink-0 items-center border-t border-[#b6b6b6] pt-px text-[12px] leading-[19px]">
      <div className="w-[75px] pl-[10px] whitespace-nowrap">Slide 2 of 2</div>
      {sep}
      <div className="w-[551px] pl-2">TextEdit: Paragraph 1, Row 1, Column 16</div>
      {sep}
      <div className="flex-1 pl-2">Blank Slide</div>
      {sep}
      <div className="flex w-[104px] items-center gap-[5px] pl-[10px] whitespace-nowrap">
        <svg width="15" height="12" viewBox="0 0 15 12" fill="none">
          <path d="M6 2.500h8.500v8h-11V6" stroke="#555" />
          <path d="M0 2.500h6M3 0v6" stroke={O} />
        </svg>
        1.27 / 0.76
      </div>
      <div className="flex w-[112px] items-center gap-1 pl-[10px] whitespace-nowrap">
        <svg width="16" height="13" viewBox="0 0 16 13" fill="none">
          <path d="M4.500 4.500h11v7h-11z" stroke="#555" />
          <path d="M4 1.500h12M4.500 0v3M15.500 0v3M1.500 5v7M0 5.500h3M0 11.500h3" stroke={O} />
        </svg>
        22.86 x 3.17
      </div>
      {sep}
      <div className="flex w-[22px] justify-center">
        <svg width="10" height="12" viewBox="0 0 10 12">
          <path d="M3 .5h4v5h2.500L5 10 .5 5.500H3z" fill="#a6d84b" stroke={G} />
          <path d="M1 11.500h8" stroke={G} />
        </svg>
      </div>
      {sep}
      <div className="w-7" />
      {sep}
      <div className="w-[377px] pl-1 text-center">English (USA)</div>
      {sep}
      <button aria-label="Fit slide" className="flex w-[21px] justify-center">
        <svg width="14" height="14" viewBox="0 0 14 14">
          <path d="M7 1v12M1 7h12" stroke={O} />
          <path d="M7 0l2.500 3h-5zM7 14l2.500-3h-5zM0 7l3-2.500v5zM14 7l-3-2.500v5z" fill={O} />
        </svg>
      </button>
      {sep}
      <button aria-label="Zoom out" className="ml-[10px] h-[2px] w-2 bg-[#666]" />
      <input
        type="range"
        aria-label="Zoom"
        defaultValue="50"
        className="mx-[6px] h-[2px] w-[97px] appearance-none bg-[#999] [&::-webkit-slider-thumb]:size-2 [&::-webkit-slider-thumb]:appearance-none [&::-webkit-slider-thumb]:rounded-full [&::-webkit-slider-thumb]:border [&::-webkit-slider-thumb]:border-[#555] [&::-webkit-slider-thumb]:bg-white"
      />
      <button aria-label="Zoom in">
        <svg width="9" height="9" viewBox="0 0 9 9"><path d="M0 4.500h9M4.500 0v9" stroke="#666" strokeWidth="2" /></svg>
      </button>
      <div className="mr-2 ml-[7px] h-[14px] w-px bg-[#d6d6d6]" />
      <div className="w-10">107%</div>
    </footer>
  );
}

export default function App() {
  return (
    <div className="flex h-screen flex-col overflow-hidden bg-[#fafafa] font-['Noto_Sans','Open_Sans',sans-serif] text-[#3d3d3d]">
      <TopBar />
      <div className="flex min-h-0 flex-1">
        <Dock />
        <div className="flex min-w-0 flex-1 flex-col">
          <TitleBar />
          <MenuBar />
          <Toolbar label="Standard" items={standardBar} />
          <Toolbar label="Drawing" items={drawingBar} />
          <div className="flex min-h-0 flex-1">
            <SlidesPanel />
            <Editor />
            <Sidebar />
            <TabBar />
          </div>
          <StatusBar />
        </div>
      </div>
    </div>
  );
}
